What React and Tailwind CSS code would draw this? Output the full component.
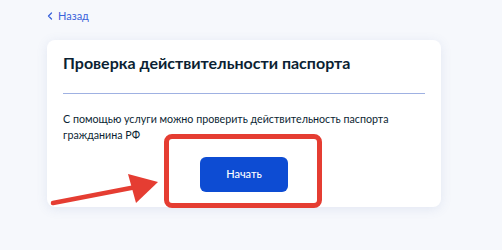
import React from 'react';

const Arrow = () => (
  <svg
    className="absolute left-0 top-0 pointer-events-none"
    width="502"
    height="250"
    viewBox="0 0 502 250"
  >
    <line x1="53" y1="203" x2="136" y2="187" stroke="#e53d32" strokeWidth="4.5" strokeLinecap="round" />
    <polygon points="158,182 128,174 136,203" fill="#e53d32" />
  </svg>
);

const App = () => {
  return (
    <div
      className="relative w-[502px] h-[250px] overflow-hidden bg-[#f6f8fc] px-[47px] pt-[8px]"
      style={{ fontFamily: 'Lato, "Noto Sans", sans-serif' }}
    >
      {/* Back link */}
      <div className="flex items-center gap-[5px] h-[16px] text-[11px] leading-[16px] text-[#3a63db]">
        <svg width="6" height="8" viewBox="0 0 6 8" fill="none">
          <path d="M4.5 1L1.5 4l3 3" stroke="currentColor" strokeWidth="1.3" strokeLinecap="round" strokeLinejoin="round" />
        </svg>
        <span>Назад</span>
      </div>

      {/* Card */}
      <div className="mt-[16px] w-[394px] bg-white rounded-[8px] shadow-[0_2px_12px_rgba(86,110,170,0.12)] px-[16px] pt-[11px] pb-[15px]">
        <h1 className="text-[16px] leading-[24px] font-bold text-[#0b1f33]">
          Проверка действительности паспорта
        </h1>
        <div className="mt-[18px] h-px bg-[#9fb1e2]" />
        <p className="mt-[17px] text-[10.7px] leading-[16px] text-[#0b1f33]">
          С помощью услуги можно проверить действительность паспорта гражданина РФ
        </p>
        <div className="mt-[14px] flex justify-center">
          <button className="w-[88px] h-[35px] rounded-[6px] bg-[#0d4cd3] text-white text-[11px] font-medium">
            Начать
          </button>
        </div>
      </div>

      {/* Annotation */}
      <div className="absolute left-[164px] top-[134px] w-[158px] h-[74px] border-[5px] border-[#e53d32] rounded-[8px] pointer-events-none" />
      <Arrow />
    </div>
  );
};

export default App;
